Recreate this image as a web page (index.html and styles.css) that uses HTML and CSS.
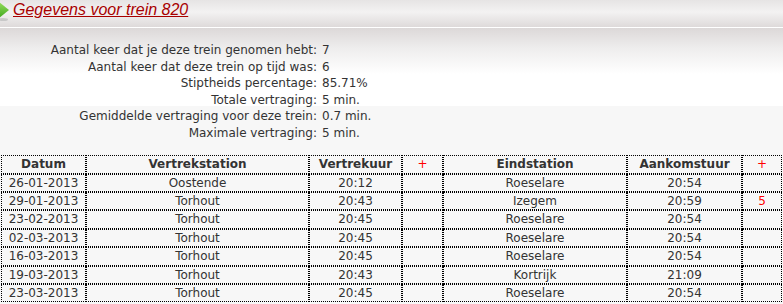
FILE: index.html
```html
<!DOCTYPE html>
<html>
<head>
<meta charset="utf-8">
<link rel="stylesheet" href="styles.css">
</head>
<body>
<div class="titlebar">
  <svg class="arrow" width="10" height="22" viewBox="0 0 10 22">
    <defs>
      <linearGradient id="g" x1="0" y1="0" x2="0" y2="1">
        <stop offset="0" stop-color="#9be060"/>
        <stop offset="1" stop-color="#3aa51a"/>
      </linearGradient>
    </defs>
    <ellipse cx="3" cy="19.5" rx="5" ry="1.5" fill="#c8c8c8"/>
    <polygon points="-2,1 9,10 -2,19" fill="url(#g)"/>
  </svg>
  <a class="title" href="#">Gegevens voor trein 820</a>
</div>
<div class="content">
  <table class="stats">
    <tr><td class="lbl">Aantal keer dat je deze trein genomen hebt:</td><td>7</td></tr>
    <tr><td class="lbl">Aantal keer dat deze trein op tijd was:</td><td>6</td></tr>
    <tr><td class="lbl">Stiptheids percentage:</td><td>85.71%</td></tr>
    <tr><td class="lbl">Totale vertraging:</td><td>5 min.</td></tr>
    <tr><td class="lbl">Gemiddelde vertraging voor deze trein:</td><td>0.7 min.</td></tr>
    <tr><td class="lbl">Maximale vertraging:</td><td>5 min.</td></tr>
  </table>
  <table class="trips">
    <colgroup>
      <col class="c1"><col class="c2"><col class="c3"><col class="c4"><col class="c5"><col class="c6"><col class="c7">
    </colgroup>
    <tr><th>Datum</th><th>Vertrekstation</th><th>Vertrekuur</th><th class="plus">+</th><th>Eindstation</th><th>Aankomstuur</th><th class="plus">+</th></tr>
    <tr><td>26-01-2013</td><td>Oostende</td><td>20:12</td><td></td><td>Roeselare</td><td>20:54</td><td></td></tr>
    <tr><td>29-01-2013</td><td>Torhout</td><td>20:43</td><td></td><td>Izegem</td><td>20:59</td><td class="late">5</td></tr>
    <tr><td>23-02-2013</td><td>Torhout</td><td>20:45</td><td></td><td>Roeselare</td><td>20:54</td><td></td></tr>
    <tr><td>02-03-2013</td><td>Torhout</td><td>20:45</td><td></td><td>Roeselare</td><td>20:54</td><td></td></tr>
    <tr><td>16-03-2013</td><td>Torhout</td><td>20:45</td><td></td><td>Roeselare</td><td>20:54</td><td></td></tr>
    <tr><td>19-03-2013</td><td>Torhout</td><td>20:43</td><td></td><td>Kortrijk</td><td>21:09</td><td></td></tr>
    <tr><td>23-03-2013</td><td>Torhout</td><td>20:45</td><td></td><td>Roeselare</td><td>20:54</td><td></td></tr>
  </table>
</div>
</body>
</html>
```
FILE: styles.css
```css
html, body {
  margin: 0;
  padding: 0;
  background: #f7f7f7;
  font-family: "DejaVu Sans", sans-serif;
  font-size: 12px;
  color: #333;
}
.titlebar {
  height: 27px;
  border-bottom: 1px solid #ffffff;
  background: linear-gradient(#e6e4e4 0, #f3f2f2 12px, #dedada 27px);
  display: flex;
  align-items: flex-start;
  overflow: hidden;
}
.arrow {
  display: block;
  flex: none;
}
.title {
  margin-left: 3px;
  margin-top: 0;
  font-family: "Liberation Sans", Arial, sans-serif;
  font-style: italic;
  font-size: 16px;
  line-height: 20px;
  color: #a80000;
  text-decoration: underline;
}
.content {
  background: linear-gradient(#dcd8d8 0, #eeeded 20px, #ffffff 46px, #ffffff 78px, #f7f7f7 78px);
  padding-top: 14px;
}
.stats {
  border-collapse: collapse;
  margin-left: 0;
}
.stats td {
  padding: 0 0 0 5px;
  line-height: 16.6px;
  white-space: nowrap;
}
.stats td.lbl {
  width: 317px;
  text-align: right;
  padding: 0;
}
.trips {
  margin: 13px 0 0 1px;
  width: 781px;
  border-collapse: separate;
  border-spacing: 0;
  table-layout: fixed;
}
.c1 { width: 85px; }
.c2 { width: 223px; }
.c3 { width: 93px; }
.c4 { width: 41px; }
.c5 { width: 184px; }
.c6 { width: 115px; }
.c7 { width: 40px; }
.trips th, .trips td {
  border: 1px dotted #000;
  padding: 0;
  text-align: center;
  line-height: 16.4px;
  font-size: 12px;
}
.trips th {
  line-height: 17px;
  font-weight: bold;
  color: #333;
}
.trips th.plus, .trips td.late {
  color: #ff0000;
  font-weight: normal;
}
```
